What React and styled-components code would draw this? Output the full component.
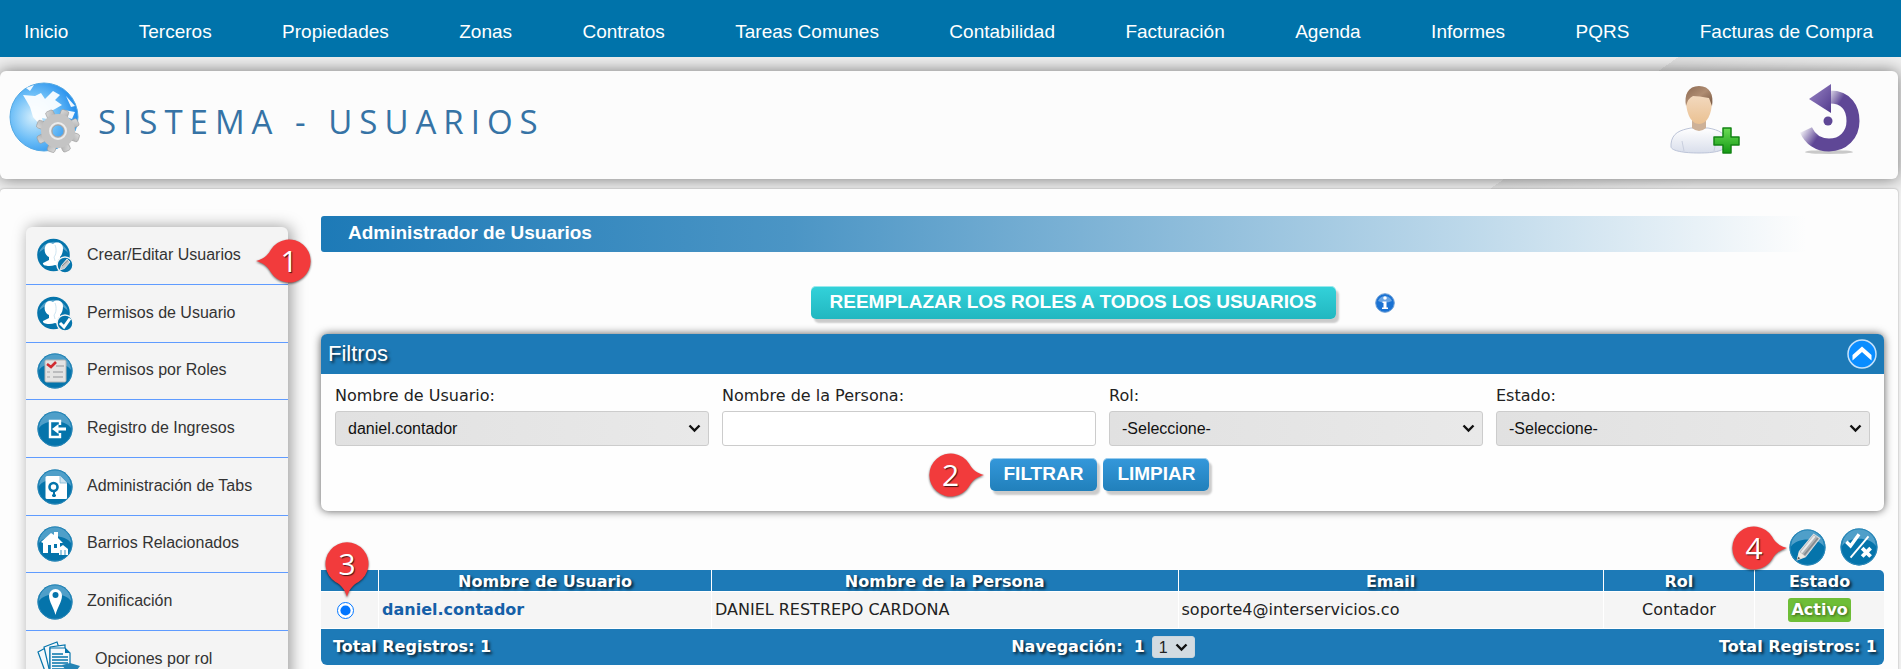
import React, { useState } from 'react';
import styled, { createGlobalStyle, css } from 'styled-components';

const sans = '"Liberation Sans", Arial, sans-serif';
const wide = '"DejaVu Sans", Verdana, sans-serif';
const blue = '#1d7ab7';

const GlobalStyle = createGlobalStyle`
  * { box-sizing: border-box; }
  html { scrollbar-width: none; }
  body { margin: 0; background: #efefef; font-family: ${sans}; font-size: 16px; color: #222; }
`;

const Page = styled.div`
  display: flex;
  flex-direction: column;
  min-height: 100vh;
  background: linear-gradient(145deg, transparent 61%, rgba(0, 0, 0, 0.06) 61%, transparent 68%);
`;

const NavBar = styled.nav`
  display: flex;
  justify-content: space-between;
  align-items: center;
  height: 57px;
  padding: 6px 28px 0 24px;
  background: #0073aa;
  position: relative;
  z-index: 2;
`;

const NavLink = styled.a`
  color: #fff;
  font-size: 19px;
  line-height: 24px;
  white-space: nowrap;
  text-decoration: none;
`;

const TitlePanel = styled.header`
  display: flex;
  align-items: flex-start;
  position: relative;
  z-index: 1;
  height: 108px;
  margin: 14px 3px 10px 0;
  padding: 11px 38px 0 9px;
  background: #fcfcfc;
  border-radius: 6px;
  box-shadow: 0 0 16px rgba(0, 0, 0, 0.5);
`;

const PageTitle = styled.h1`
  flex: 1;
  margin: 16px 0 0 18px;
  font-family: "Open Sans", "Noto Sans", sans-serif;
  font-size: 33px;
  line-height: 48px;
  font-weight: 400;
  letter-spacing: 7px;
  white-space: nowrap;
  color: #3673a5;
`;

const TitleActions = styled.div`
  display: flex;
  gap: 60px;
`;

const IconButton = styled.button`
  display: block;
  padding: 0;
  border: 0;
  background: none;
  cursor: pointer;
  svg { display: block; }
`;

const Content = styled.div`
  display: flex;
  flex: 1;
  align-items: flex-start;
  gap: 33px;
  position: relative;
  z-index: 2;
  margin-right: 3px;
  padding: 27px 14px 0 26px;
  background: #fdfdfd;
  border-radius: 4px;
  box-shadow: 0 0 2px rgba(0, 0, 0, 0.35);
`;

const SideMenu = styled.aside`
  flex: none;
  width: 262px;
  margin-top: 11px;
  background: #f4f4f4;
  border-radius: 6px 6px 0 0;
  box-shadow: 3px 0 16px rgba(0, 0, 0, 0.4);
`;

const SideList = styled.ul`
  list-style: none;
  margin: 0;
  padding: 0;
`;

const SideItem = styled.li`
  position: relative;
  height: 58px;
  border-bottom: 1px solid #5f9bff;
  &:nth-child(3n) { height: 57px; }
`;

const SideLink = styled.a`
  display: flex;
  align-items: center;
  gap: 14px;
  height: 100%;
  padding: 0 0 2px 11px;
  color: #333;
  font-size: 16px;
  line-height: 20px;
  text-decoration: none;
  svg { flex: none; margin-top: 2px; }
`;

const Main = styled.main`
  flex: 1;
  min-width: 0;
`;

const SectionBar = styled.h2`
  margin: 0;
  padding: 0 27px;
  height: 36px;
  font-size: 19px;
  line-height: 34px;
  color: #fff;
  border-radius: 3px;
  background: linear-gradient(to right, #1d7ab7 0%, #4b95c5 30%, #bcd8ea 73%, rgba(253, 253, 253, 0) 95%);
`;

const RolesRow = styled.div`
  display: flex;
  justify-content: center;
  align-items: center;
  gap: 39px;
  margin: 34px 0 15px;
`;

const ActionButton = styled.button`
  height: 33px;
  padding: 0 ${({ $tone }) => ($tone === 'teal' ? 19 : 14)}px 2px;
  border: 0;
  border-radius: 5px;
  font-family: ${sans};
  font-size: 19px;
  line-height: 24px;
  font-weight: 700;
  color: #fff;
  text-transform: uppercase;
  white-space: nowrap;
  cursor: pointer;
  box-shadow: inset 0 1px 0 rgba(255, 255, 255, 0.5), 3px 4px 2px rgba(0, 0, 0, 0.2);
  background: ${({ $tone }) =>
    $tone === 'teal'
      ? 'linear-gradient(#33d2da, #22b7c0)'
      : 'linear-gradient(#3498db, #2180bb)'};
`;

const FilterPanel = styled.section`
  border-radius: 7px;
  background: #fefefe;
  box-shadow: 0 0 8px rgba(0, 0, 0, 0.65);
`;

const FilterHeader = styled.div`
  display: flex;
  justify-content: space-between;
  align-items: center;
  height: 40px;
  padding: 0 7px;
  border-radius: 6px 6px 0 0;
  background: ${blue};
`;

const FilterTitle = styled.h3`
  margin: 0;
  font-size: 22px;
  line-height: 28px;
  font-weight: 400;
  color: #fff;
  text-shadow: 2px 2px 3px rgba(0, 0, 0, 0.7);
`;

const FilterForm = styled.form`
  padding: 10px 14px 20px;
`;

const FieldGrid = styled.div`
  display: grid;
  grid-template-columns: repeat(4, minmax(0, 1fr));
  gap: 13px;
`;

const Field = styled.div`
  display: flex;
  flex-direction: column;
  gap: 3px;
`;

const FieldLabel = styled.label`
  font-family: ${wide};
  font-size: 16px;
  line-height: 24px;
`;

const control = css`
  width: 100%;
  height: 35px;
  border: 1px solid #ccc;
  border-radius: 3px;
  font-family: ${sans};
  font-size: 16px;
  color: #111;
`;

const SelectFrame = styled.span`
  display: grid;
  align-items: center;
  > * { grid-area: 1 / 1; }
  svg {
    justify-self: end;
    margin-right: ${({ $compact }) => ($compact ? 7 : 8)}px;
    pointer-events: none;
  }
`;

const Select = styled.select`
  ${control}
  appearance: none;
  padding: 0 24px 0 12px;
  background: linear-gradient(to right, #e1e1e1, #e9e9e9);
`;

const TextInput = styled.input`
  ${control}
  padding: 0 12px;
  background: #fff;
`;

const FormActions = styled.div`
  display: flex;
  justify-content: center;
  gap: 6px;
  margin-top: 12px;
  padding-right: 6px;
`;

const Anchor = styled.div`
  position: relative;
`;

const TableTools = styled.div`
  display: flex;
  justify-content: flex-end;
  align-items: center;
  gap: 14px;
  margin: 17px 0 4px;
  padding-right: 6px;
`;

const Table = styled.table`
  width: 100%;
  table-layout: fixed;
  border-collapse: separate;
  border-spacing: 0;
  font-family: ${wide};
  font-size: 16px;
  line-height: 20px;
`;

const HeadCell = styled.th`
  position: relative;
  height: 22px;
  padding: 2px 0 0;
  line-height: 19px;
  color: #fff;
  background: ${blue};
  border-bottom: 1px solid #fff;
  text-shadow: 2px 2px 3px rgba(0, 0, 0, 0.75);
  & + & { border-left: 1px solid #fff; }
  &:last-child { border-top-right-radius: 5px; }
`;

const Cell = styled.td`
  height: 37px;
  padding: 0 3px;
  text-align: ${({ $center }) => ($center ? 'center' : 'left')};
  background: #f5f5f5;
  border-bottom: 1px solid #fff;
  & + & { border-left: 1px solid #fff; }
`;

const RowRadio = styled.input`
  display: block;
  width: 17px;
  height: 17px;
  margin: 0 0 0 13px;
  accent-color: #0075ff;
`;

const UserLink = styled.a`
  color: #1560a8;
  font-weight: 700;
  text-decoration: none;
`;

const StatusTag = styled.span`
  display: inline-block;
  padding: 0 3px;
  border-radius: 3px;
  background: #6ebe37;
  color: #fff;
  font-weight: 700;
  line-height: 24px;
  text-shadow: 1px 1px 3px rgba(0, 0, 0, 0.5);
`;

const FootCell = styled.td`
  padding: 0;
  background: ${blue};
  border-radius: 0 0 6px 6px;
`;

const FootBar = styled.div`
  display: grid;
  grid-template-columns: 1fr auto 1fr;
  align-items: center;
  height: 36px;
  padding: 0 7px 0 12px;
  color: #fff;
  font-weight: 700;
  text-shadow: 2px 2px 3px rgba(0, 0, 0, 0.75);
`;

const Pager = styled.label`
  display: flex;
  align-items: center;
  gap: 7px;
  padding-right: 4px;
`;

const PagerPage = styled.span`
  margin-left: 4px;
`;

const PageSelect = styled.select`
  appearance: none;
  width: 43px;
  height: 22px;
  padding: 0 0 0 6px;
  border: 1px solid #c9d5dd;
  border-radius: 3px;
  background: #d3dbe1;
  font-family: ${sans};
  font-size: 16px;
  color: #222;
`;

const TotalRight = styled.span`
  text-align: right;
`;

const MarkerBox = styled.span`
  position: absolute;
  z-index: 3;
  ${({ $place }) => $place}
  display: block;
  width: 44px;
  height: 44px;
  font-family: "Open Sans", sans-serif;
  font-weight: 500;
  font-size: 30px;
  line-height: 43px;
  text-align: center;
  color: #fff;
  text-shadow: 1px 1px 1px rgba(0, 0, 0, 0.7);
  pointer-events: none;
  svg {
    position: absolute;
    z-index: -1;
    left: 0;
    top: 0;
    overflow: visible;
    filter: drop-shadow(0 1px 1px rgba(0, 0, 0, 0.6));
  }
`;

const markerTurn = { down: 0, left: 90, right: -90 };

function Marker({ number, point, place }) {
  return (
    <MarkerBox $place={place}>
      <svg width="44" height="44" viewBox="0 0 44 44" aria-hidden="true">
        <path
          transform={`rotate(${markerTurn[point]} 22 22)`}
          fill="#f23b3c"
          d="M22 55C20 48 17 43.500 10.500 40A21.500 21.500 0 1 1 33.500 40C27 43.500 24 48 22 55Z"
        />
      </svg>
      {number}
    </MarkerBox>
  );
}

function Chevron() {
  return (
    <svg width="13" height="9" viewBox="0 0 13 9" aria-hidden="true">
      <path d="M1.500 1.500L6.500 6.500L11.500 1.500" fill="none" stroke="#111" strokeWidth="2.400" />
    </svg>
  );
}

function Disc({ children, size = 36 }) {
  return (
    <svg width={size} height={size} viewBox="0 0 36 36" aria-hidden="true">
      <circle cx="18" cy="18" r="17.500" fill="#0574ab" />
      <path d="M2 17A16 16 0 0 1 34 17C28 8 8 8 2 17Z" fill="#4f9fc9" />
      <circle cx="18" cy="18" r="17" fill="none" stroke="#2d89b9" />
      {children}
    </svg>
  );
}

function People({ badge }) {
  return (
    <svg width="36" height="36" viewBox="0 0 36 36" aria-hidden="true">
      <circle cx="16.500" cy="17" r="16.300" fill="#0574ab" />
      <path d="M2 15A15 15 0 0 1 31 15C25 7 8 7 2 15Z" fill="#4f9fc9" />
      <path
        fill="#fff"
        d="M8 9C9 5 13 4 16 6C20 3 26 5 26 10C26 14 25 17 23 19L23 22L27 24C29 27 22 29 18 27C13 29 5 28 6 25L12 22L12 19C8 17 7 13 8 9Z"
      />
      <path d="M18 7C20 12 19 17 17 19L18 23" stroke="#cfe5f1" strokeWidth="1" fill="none" />
      <circle cx="28" cy="27" r="8" fill="#0574ab" stroke="#f4f4f4" strokeWidth="1.500" />
      {badge === 'pencil' ? (
        <>
          <path d="M23 32L24.500 27.500L30 21L33 24L27.500 30.500Z" fill="#c3c6c8" stroke="#eee" strokeWidth=".8" />
          <path d="M25 28L31 22.500" stroke="#888" strokeWidth="1" />
        </>
      ) : (
        <path d="M23 27L27 31L33 22.500" fill="none" stroke="#fff" strokeWidth="3" />
      )}
    </svg>
  );
}

function RolesIcon() {
  return (
    <Disc>
      <rect x="8" y="7" width="21" height="22" rx="1.500" fill="#e3e3e3" stroke="#b5b5b5" />
      <path d="M19 13H27M16 19H26M16 24H26" stroke="#aeb0b2" strokeWidth="1.600" />
      <path d="M10 19H13M10 24H13" stroke="#c4c4c4" strokeWidth="2" />
      <path d="M10 11L14 14L19 9" fill="none" stroke="#d02c31" strokeWidth="2.600" />
    </Disc>
  );
}

function EntryIcon() {
  return (
    <Disc>
      <path d="M23 14V10H13V26H23V22" fill="none" stroke="#fff" strokeWidth="2.400" />
      <path d="M29 18H19" stroke="#fff" strokeWidth="3" />
      <path d="M15 18L21.500 13V23Z" fill="#fff" />
    </Disc>
  );
}

function TabsIcon() {
  return (
    <Disc>
      <path d="M10 7H23L30 14V29Q30 30 29 30H10Q8.500 30 8.500 28.500V8.500Q8.500 7 10 7Z" fill="#fff" />
      <path d="M23 7V14H30" fill="#cfe4f0" stroke="#7eb6d4" strokeWidth=".8" />
      <circle cx="16.500" cy="18" r="4" fill="none" stroke="#0574ab" strokeWidth="2.600" />
      <path d="M17 22V28M15 26.500H19" stroke="#0574ab" strokeWidth="2" />
    </Disc>
  );
}

function HouseIcon() {
  return (
    <Disc>
      <path
        fill="#fff"
        d="M4 16L14 7L17 9V6H21V12L26 17H23V21L26 19L31 23V29H22V27H6V17Z"
      />
      <path d="M11 19H14V27H11ZM17 18H20V22H17Z" fill="#0574ab" />
      <path d="M24 24V29M28 24V29" stroke="#5ca6cc" strokeWidth="1.200" />
    </Disc>
  );
}

function PinIcon() {
  return (
    <Disc>
      <path fill="#fff" d="M18.500 31C17 24 12 18 12 11.500A6.500 6.500 0 0 1 25 11.500C25 18 20 24 18.500 31Z" />
      <circle cx="18.500" cy="11" r="3" fill="#0574ab" />
    </Disc>
  );
}

function OptionsIcon() {
  return (
    <svg width="44" height="38" viewBox="0 0 44 38" aria-hidden="true">
      <g fill="#f4f8fb" stroke="#0574ab" strokeWidth="1.200">
        <path d="M1 11L14 4L24 30L9 33Z" />
        <path d="M7 6L20 1L30 30L13 32Z" />
        <path d="M13 6L28 4V32H13Z" />
        <path d="M13 7H28L33 12V38H13Z" />
      </g>
      <path d="M28 7V12H33Z" fill="#0574ab" />
      <path d="M15 13H26M15 16H31M15 19H31M15 22H31M15 25H28M15 28H28M15 31H28" stroke="#0574ab" strokeWidth="1.600" />
      <path d="M25 24L33 22L43 25L40 29L34 38H28V28Z" fill="#2484b5" />
    </svg>
  );
}

function GlobeGear() {
  const teeth = Array.from({ length: 8 }, (_, i) => i * 45);
  return (
    <svg width="71" height="72" viewBox="0 0 71 72" aria-hidden="true">
      <defs>
        <radialGradient id="globe" cx=".35" cy=".5" r=".7">
          <stop offset="0" stopColor="#d5effd" />
          <stop offset=".5" stopColor="#6bbdf7" />
          <stop offset="1" stopColor="#1584ea" />
        </radialGradient>
        <linearGradient id="gear" x1="0" y1="0" x2="1" y2="1">
          <stop offset="0" stopColor="#dcdcdc" />
          <stop offset="1" stopColor="#a6a6a6" />
        </linearGradient>
      </defs>
      <circle cx="35" cy="35" r="34" fill="url(#globe)" stroke="#55a9e3" />
      <path
        fill="#fff"
        opacity=".93"
        d="M14 13L26 14L32 11L36 17L44 9L51 13L46 18L53 23L46 27L40 30L38 37L33 36L35 43L30 42L24 35L21 25L17 18ZM17 6L25 3L21 9ZM57 14L66 24L62 25ZM55 28L66 30L63 37L54 34Z"
      />
      <g transform="translate(49 49)">
        {teeth.map((a) => (
          <rect key={a} x="-4" y="-22" width="8" height="12" rx="2" fill="url(#gear)" stroke="#9a9a9a" strokeWidth=".6" transform={`rotate(${a + 20})`} />
        ))}
        <circle r="11.500" fill="none" stroke="#c4c4c4" strokeWidth="11" />
        <circle r="8" fill="none" stroke="#ececec" strokeWidth="2" />
        <circle r="6" fill="none" stroke="#a3a3a3" strokeWidth="1" />
      </g>
    </svg>
  );
}

function AddUserIcon() {
  return (
    <svg width="70" height="72" viewBox="0 0 70 72" aria-hidden="true">
      <defs>
        <linearGradient id="skin" x1="0" y1="0" x2="0" y2="1">
          <stop offset="0" stopColor="#f5dfca" />
          <stop offset="1" stopColor="#eac192" />
        </linearGradient>
        <linearGradient id="hair" x1="0" y1="0" x2="1" y2="1">
          <stop offset="0" stopColor="#8b6952" />
          <stop offset=".5" stopColor="#b08d72" />
          <stop offset="1" stopColor="#74543e" />
        </linearGradient>
        <linearGradient id="shirt" x1="0" y1="0" x2="0" y2="1">
          <stop offset="0" stopColor="#ffffff" />
          <stop offset="1" stopColor="#d9deeb" />
        </linearGradient>
        <linearGradient id="plus" x1="0" y1="0" x2="0" y2="1">
          <stop offset="0" stopColor="#6bdc55" />
          <stop offset="1" stopColor="#149a14" />
        </linearGradient>
      </defs>
      <path d="M1 62C2 51 10 48 21 46H38C49 48 56 51 57 62C56 69 44 71 29 71C14 71 2 69 1 65Z" fill="url(#shirt)" stroke="#bcc4d8" />
      <path d="M14 69L12 59M44 69L46 59" stroke="#c9cfde" fill="none" />
      <path d="M22 38H36V46Q29 52 22 46Z" fill="#cdb198" />
      <path d="M16 18C16 8 20 6 29 6C38 6 42 9 42 19C42 32 37 42 29 42C21 42 16 31 16 18Z" fill="url(#skin)" />
      <path d="M16 24C14 13 18 4 29 4C40 4 44 13 42 24L39 16Q29 14 23 14Q18 16 16 24Z" fill="url(#hair)" />
      <path d="M53 46H61V55H69V63H61V71H53V63H44V55H53Z" fill="url(#plus)" stroke="#138414" strokeWidth="1.500" strokeLinejoin="round" />
    </svg>
  );
}

function BackIcon() {
  return (
    <svg width="60" height="72" viewBox="0 0 60 72" aria-hidden="true">
      <defs>
        <linearGradient id="tail" gradientUnits="userSpaceOnUse" x1="2" y1="49" x2="16" y2="58">
          <stop offset="0" stopColor="#5f4796" stopOpacity=".1" />
          <stop offset="1" stopColor="#5f4796" />
        </linearGradient>
        <linearGradient id="tip" x1="0" y1="0" x2="1" y2="1">
          <stop offset="0" stopColor="#9b87c6" />
          <stop offset="1" stopColor="#523a8d" />
        </linearGradient>
      </defs>
      <ellipse cx="29" cy="70" rx="24" ry="2" fill="#c9c9c9" />
      <path d="M30 15C47 15 53 27 53 39C53 53 43 63 29 63C18 63 10 57 6 48" fill="none" stroke="url(#tail)" strokeWidth="13" />
      <path d="M9 17L31 2V31Z" fill="url(#tip)" />
      <circle cx="28" cy="39" r="4.500" fill="#5f4796" />
    </svg>
  );
}

function InfoIcon() {
  return (
    <svg width="20" height="20" viewBox="0 0 20 20" role="img" aria-label="Información">
      <circle cx="10" cy="10" r="9.300" fill="#1a72d3" stroke="#6e9fd6" />
      <path d="M3 8A7.500 7.500 0 0 1 17 8Q10 11 3 8Z" fill="#6aa5e4" />
      <circle cx="10" cy="5" r="1.800" fill="#fff" />
      <path d="M7.500 8.500H11.500V14.500H13V16H7V14.500H8.500V10H7.500Z" fill="#fff" />
    </svg>
  );
}

function CollapseIcon() {
  return (
    <svg width="30" height="30" viewBox="0 0 30 30" aria-hidden="true">
      <circle cx="15" cy="15" r="14" fill="#0a8dff" stroke="#c6e2fb" strokeWidth="1.500" />
      <path d="M5.500 16L15 7.500L24.500 16V21.500L15 13L5.500 21.500Z" fill="#fff" />
    </svg>
  );
}

function EditIcon() {
  return (
    <Disc size={37}>
      <path d="M8 30L10 22L24 5L30 9L16 27Z" fill="#aeb2b5" stroke="#d9dcde" />
      <path d="M12 23L25 7" stroke="#e9eaea" strokeWidth="2" />
      <path d="M15 25L28 9" stroke="#858a8e" strokeWidth="1.500" />
      <path d="M8 30L10 22L16 27Z" fill="#f1ece4" />
      <path d="M8 30L9 27L11 28.500Z" fill="#555" />
    </Disc>
  );
}

function ToggleIcon() {
  return (
    <Disc size={38}>
      <path d="M6 13L10 17L18 6" fill="none" stroke="#fff" strokeWidth="3.200" />
      <path d="M10 28L27 8" stroke="#fff" strokeWidth="1.800" />
      <path d="M21 19L29 27M29 19L21 27" stroke="#fff" strokeWidth="3.600" />
    </Disc>
  );
}

const navItems = [
  'Inicio', 'Terceros', 'Propiedades', 'Zonas', 'Contratos', 'Tareas Comunes',
  'Contabilidad', 'Facturación', 'Agenda', 'Informes', 'PQRS', 'Facturas de Compra',
];

const sideItems = [
  { label: 'Crear/Editar Usuarios', icon: <People badge="pencil" />, marker: true },
  { label: 'Permisos de Usuario', icon: <People badge="check" /> },
  { label: 'Permisos por Roles', icon: <RolesIcon /> },
  { label: 'Registro de Ingresos', icon: <EntryIcon /> },
  { label: 'Administración de Tabs', icon: <TabsIcon /> },
  { label: 'Barrios Relacionados', icon: <HouseIcon /> },
  { label: 'Zonificación', icon: <PinIcon /> },
  { label: 'Opciones por rol', icon: <OptionsIcon /> },
];

function SelectField({ id, label, option }) {
  return (
    <Field>
      <FieldLabel htmlFor={id}>{label}</FieldLabel>
      <SelectFrame>
        <Select id={id}><option>{option}</option></Select>
        <Chevron />
      </SelectFrame>
    </Field>
  );
}

export default function App() {
  const [person, setPerson] = useState('');
  return (
    <>
      <GlobalStyle />
      <Page>
        <NavBar>
          {navItems.map((item) => (
            <NavLink key={item} href="#">{item}</NavLink>
          ))}
        </NavBar>
        <TitlePanel>
          <GlobeGear />
          <PageTitle>SISTEMA - USUARIOS</PageTitle>
          <TitleActions>
            <IconButton aria-label="Crear usuario"><AddUserIcon /></IconButton>
            <IconButton aria-label="Volver"><BackIcon /></IconButton>
          </TitleActions>
        </TitlePanel>
        <Content>
          <SideMenu>
            <SideList>
              {sideItems.map(({ label, icon, marker }) => (
                <SideItem key={label}>
                  <SideLink href="#">{icon}{label}</SideLink>
                  {marker && <Marker number="1" point="left" place={{ top: '12px', right: '-23px' }} />}
                </SideItem>
              ))}
            </SideList>
          </SideMenu>
          <Main>
            <SectionBar>Administrador de Usuarios</SectionBar>
            <RolesRow>
              <ActionButton $tone="teal">Reemplazar los roles a todos los usuarios</ActionButton>
              <InfoIcon />
            </RolesRow>
            <FilterPanel>
              <FilterHeader>
                <FilterTitle>Filtros</FilterTitle>
                <IconButton aria-label="Contraer filtros"><CollapseIcon /></IconButton>
              </FilterHeader>
              <FilterForm onSubmit={(e) => e.preventDefault()}>
                <FieldGrid>
                  <SelectField id="usuario" label="Nombre de Usuario:" option="daniel.contador" />
                  <Field>
                    <FieldLabel htmlFor="persona">Nombre de la Persona:</FieldLabel>
                    <TextInput id="persona" value={person} onChange={(e) => setPerson(e.target.value)} />
                  </Field>
                  <SelectField id="rol" label="Rol:" option="-Seleccione-" />
                  <SelectField id="estado" label="Estado:" option="-Seleccione-" />
                </FieldGrid>
                <FormActions>
                  <Anchor>
                    <ActionButton type="submit">Filtrar</ActionButton>
                    <Marker number="2" point="right" place={{ top: '-5px', left: '-61px' }} />
                  </Anchor>
                  <ActionButton type="reset">Limpiar</ActionButton>
                </FormActions>
              </FilterForm>
            </FilterPanel>
            <TableTools>
              <Anchor>
                <IconButton aria-label="Editar"><EditIcon /></IconButton>
                <Marker number="4" point="right" place={{ top: '-3px', left: '-57px' }} />
              </Anchor>
              <IconButton aria-label="Activar o inactivar"><ToggleIcon /></IconButton>
            </TableTools>
            <Table>
              <colgroup>
                <col width="3.65%" />
                <col width="21.3%" />
                <col width="29.85%" />
                <col width="27.2%" />
                <col width="9.7%" />
                <col width="8.3%" />
              </colgroup>
              <thead>
                <tr>
                  <HeadCell><Marker number="3" point="down" place={{ top: '-28px', left: '4px' }} /></HeadCell>
                  <HeadCell>Nombre de Usuario</HeadCell>
                  <HeadCell>Nombre de la Persona</HeadCell>
                  <HeadCell>Email</HeadCell>
                  <HeadCell>Rol</HeadCell>
                  <HeadCell>Estado</HeadCell>
                </tr>
              </thead>
              <tbody>
                <tr>
                  <Cell><RowRadio type="radio" name="fila" defaultChecked aria-label="daniel.contador" /></Cell>
                  <Cell><UserLink href="#">daniel.contador</UserLink></Cell>
                  <Cell>DANIEL RESTREPO CARDONA</Cell>
                  <Cell>soporte4@interservicios.co</Cell>
                  <Cell $center>Contador</Cell>
                  <Cell $center><StatusTag>Activo</StatusTag></Cell>
                </tr>
              </tbody>
              <tfoot>
                <tr>
                  <FootCell colSpan={6}>
                    <FootBar>
                      <span>Total Registros: 1</span>
                      <Pager>
                        Navegación: <PagerPage>1</PagerPage>
                        <SelectFrame $compact>
                          <PageSelect><option>1</option></PageSelect>
                          <Chevron />
                        </SelectFrame>
                      </Pager>
                      <TotalRight>Total Registros: 1</TotalRight>
                    </FootBar>
                  </FootCell>
                </tr>
              </tfoot>
            </Table>
          </Main>
        </Content>
      </Page>
    </>
  );
}
